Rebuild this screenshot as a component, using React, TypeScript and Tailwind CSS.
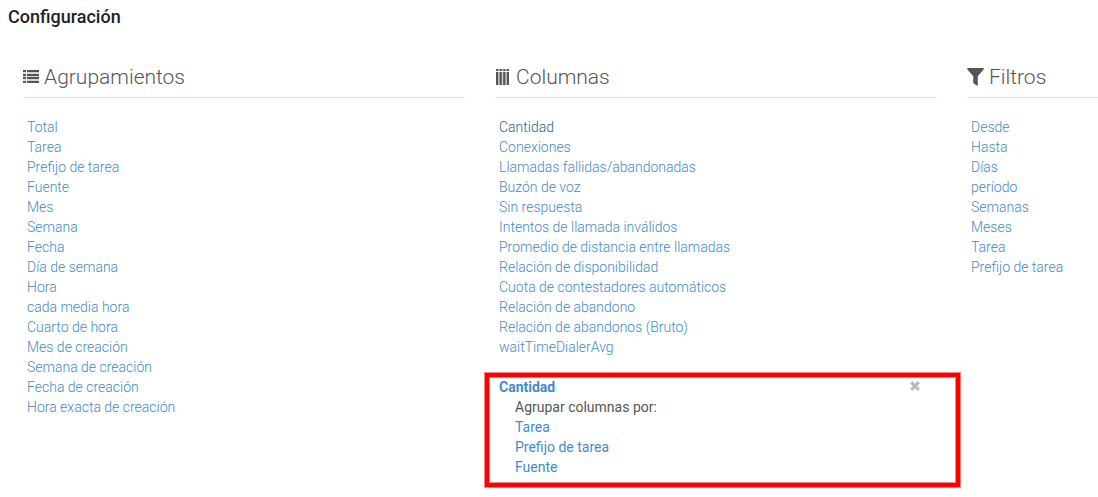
import type { ReactNode } from 'react'

const groupings = [
  'Total', 'Tarea', 'Prefijo de tarea', 'Fuente', 'Mes', 'Semana', 'Fecha', 'Día de semana',
  'Hora', 'cada media hora', 'Cuarto de hora', 'Mes de creación', 'Semana de creación',
  'Fecha de creación', 'Hora exacta de creación',
]

const columns = [
  'Cantidad', 'Conexiones', 'Llamadas fallidas/abandonadas', 'Buzón de voz', 'Sin respuesta',
  'Intentos de llamada inválidos', 'Promedio de distancia entre llamadas',
  'Relación de disponibilidad', 'Cuota de contestadores automáticos', 'Relación de abandono',
  'Relación de abandonos (Bruto)', 'waitTimeDialerAvg',
]

const filters = ['Desde', 'Hasta', 'Días', 'período', 'Semanas', 'Meses', 'Tarea', 'Prefijo de tarea']

function ListIcon() {
  return (
    <svg width="16" height="14" viewBox="0 0 16 14" fill="currentColor">
      <rect x="0" y="0" width="3" height="13" opacity="0.2" />
      <rect x="4" y="0" width="12" height="13" opacity="0.25" />
      {[0, 4, 7, 11].map((y) => (
        <g key={y}>
          <rect x="0" y={y} width="3" height="2" />
          <rect x="4" y={y} width="12" height="2" />
        </g>
      ))}
    </svg>
  )
}

// same glyph as the list, turned upright
function ColumnsIcon() {
  return (
    <svg width="16" height="16" viewBox="0 0 16 16" fill="currentColor">
      <rect x="1" y="0" width="13" height="2" opacity="0.25" />
      <rect x="1" y="3" width="13" height="13" opacity="0.25" />
      {[1, 4.6, 8.2, 11.8].map((x) => (
        <g key={x}>
          <rect x={x} y="0" width="2.2" height="2" />
          <rect x={x} y="3" width="2.2" height="13" />
        </g>
      ))}
    </svg>
  )
}

function FilterIcon() {
  return (
    <svg width="17" height="18" viewBox="0 0 18 18" preserveAspectRatio="none" fill="currentColor">
      <path d="M.8 0h16.4q.8 0 .6.8t-.7 1.1L11.4 8.2v9.1q0 .7-.6.4L7.2 15.4Q6.6 15.2 6.6 14.8V8.2L.9 1.9Q.3 1.5.2.8T.8 0Z" />
    </svg>
  )
}

function CloseIcon() {
  return (
    <svg width="10" height="10" viewBox="0 0 10 10" fill="none" stroke="currentColor" strokeWidth="3.2">
      <path d="m1.2 1.2 7.6 7.6m0-7.6-7.6 7.6" />
    </svg>
  )
}

type SectionProps = {
  title: string
  icon: ReactNode
  items: string[]
  active?: string
}

function Section({ title, icon, items, active }: SectionProps) {
  return (
    <>
      <h3 className="flex h-[42px] items-center gap-[5px] border-b border-[#e5e5e5] text-[21px] font-light text-[#555]">
        <span className="flex">{icon}</span>
        {title}
      </h3>
      <ul className="mt-[19px] pl-1">
        {items.map((item) => (
          <li key={item}>
            <a href="#" className={item === active ? 'text-[#2a6496]' : 'text-[#428bca]'}>{item}</a>
          </li>
        ))}
      </ul>
    </>
  )
}

export default function App() {
  return (
    <div className="h-[497px] w-[1098px] overflow-hidden bg-white font-['Roboto',sans-serif] text-[14px] leading-5 font-light text-[#555]">
      <h1 className="h-14 pt-[7px] pl-2 text-[18px] font-medium text-[#222]">Configuración</h1>
      <div className="flex">
        <section className="ml-[23px] w-[442px] shrink-0">
          <Section title="Agrupamientos" icon={<ListIcon />} items={groupings} />
        </section>
        <section className="ml-[30px] w-[442px] shrink-0">
          <Section title="Columnas" icon={<ColumnsIcon />} items={columns} active="Cantidad" />
          <div className="mt-[15px] -mr-6 -ml-[11px] h-[116px] w-[477px] border border-[#ff8080] font-normal">
            <div className="h-full border-4 border-[#ff0000] pl-[10px] outline outline-offset-[-5px] outline-[#ff8080]">
              <div className="flex justify-between pr-[36px]">
                <a href="#" className="font-bold text-[#428bca]">Cantidad</a>
                <span className="mt-1 text-[#bbb]"><CloseIcon /></span>
              </div>
              <div className="pl-4">
                <p>Agrupar columnas por:</p>
                {['Tarea', 'Prefijo de tarea', 'Fuente'].map((item) => (
                  <a key={item} href="#" className="block text-[#428bca]">{item}</a>
                ))}
              </div>
            </div>
          </div>
        </section>
        <section className="ml-[30px] w-[442px] shrink-0">
          <Section title="Filtros" icon={<FilterIcon />} items={filters} />
        </section>
      </div>
    </div>
  )
}
